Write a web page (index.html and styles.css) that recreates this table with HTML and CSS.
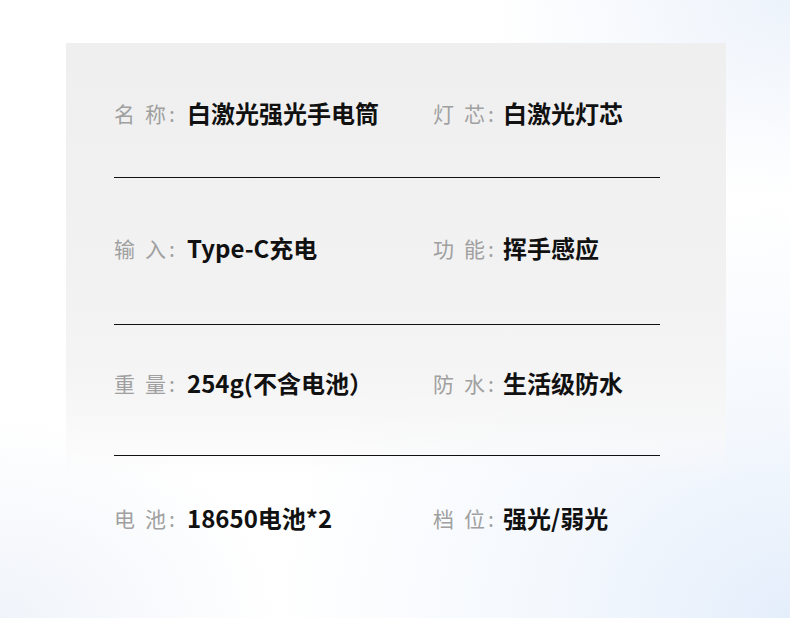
FILE: index.html
```html
<!DOCTYPE html>
<html lang="zh">
<head>
<meta charset="utf-8">
<link rel="stylesheet" href="styles.css">
</head>
<body>
<div class="page">
  <div class="panel">
    <div class="rows">
      <div class="row r1">
        <div class="cell"><span class="lab"><span class="c">名</span><span class="c2">称</span>:</span><span class="val">白激光强光手电筒</span></div>
        <div class="cell right"><span class="lab"><span class="c">灯</span><span class="c2">芯</span>:</span><span class="val">白激光灯芯</span></div>
      </div>
      <div class="row r2">
        <div class="cell"><span class="lab"><span class="c">输</span><span class="c2">入</span>:</span><span class="val">Type-C充电</span></div>
        <div class="cell right"><span class="lab"><span class="c">功</span><span class="c2">能</span>:</span><span class="val">挥手感应</span></div>
      </div>
      <div class="row r3">
        <div class="cell"><span class="lab"><span class="c">重</span><span class="c2">量</span>:</span><span class="val">254g(不含电池）</span></div>
        <div class="cell right"><span class="lab"><span class="c">防</span><span class="c2">水</span>:</span><span class="val">生活级防水</span></div>
      </div>
      <div class="row r4">
        <div class="cell"><span class="lab"><span class="c">电</span><span class="c2">池</span>:</span><span class="val">18650电池*2</span></div>
        <div class="cell right"><span class="lab"><span class="c">档</span><span class="c2">位</span>:</span><span class="val">强光/弱光</span></div>
      </div>
    </div>
  </div>
</div>
</body>
</html>
```
FILE: styles.css
```css
html, body {
  margin: 0;
  padding: 0;
}
body {
  width: 790px;
  height: 618px;
  overflow: hidden;
  font-family: "Noto Sans CJK SC", "Noto Sans", sans-serif;
}
.page {
  width: 790px;
  height: 618px;
  box-sizing: border-box;
  padding-top: 43px;
  padding-left: 66px;
  background:
    radial-gradient(ellipse 520px 420px at 100% 100%, #e4eefb 0%, rgba(236,243,252,0.6) 45%, rgba(255,255,255,0) 100%),
    radial-gradient(ellipse 300px 200px at 100% 0%, #edf3fb 0%, rgba(255,255,255,0) 100%),
    radial-gradient(ellipse 280px 200px at 0% 100%, #f0f4fa 0%, rgba(255,255,255,0) 100%),
    #ffffff;
}
.panel {
  width: 660px;
  height: 520px;
  box-sizing: border-box;
  padding-top: 55px;
  padding-left: 48px;
  background: linear-gradient(to bottom,
    #efefef 0px,
    #f2f2f2 250px,
    #f5f5f5 340px,
    rgba(248,248,248,0.7) 395px,
    rgba(255,255,255,0) 435px);
}
.rows {
  width: 546px;
}
.row {
  display: grid;
  grid-template-columns: 319px 1fr;
  height: 30px;
  align-items: center;
}
.r1 { padding-bottom: 49px; border-bottom: 1px solid #111; }
.r2 { padding-top: 55px; padding-bottom: 61px; border-bottom: 1px solid #111; }
.r3 { padding-top: 43px; padding-bottom: 57px; border-bottom: 1px solid #111; }
.r4 { padding-top: 47px; }
.cell {
  display: flex;
  align-items: center;
  white-space: nowrap;
  line-height: 30px;
}
.lab {
  display: inline-flex;
  align-items: center;
  width: 73px;
  font-size: 21px;
  color: #a0a0a0;
  font-weight: 400;
}
.right .lab {
  width: 70px;
}
.lab .c {
  margin-right: 10px;
}
.lab .c2 {
  margin-right: 3px;
}
.val {
  font-size: 24px;
  font-weight: 700;
  color: #111111;
}
```
